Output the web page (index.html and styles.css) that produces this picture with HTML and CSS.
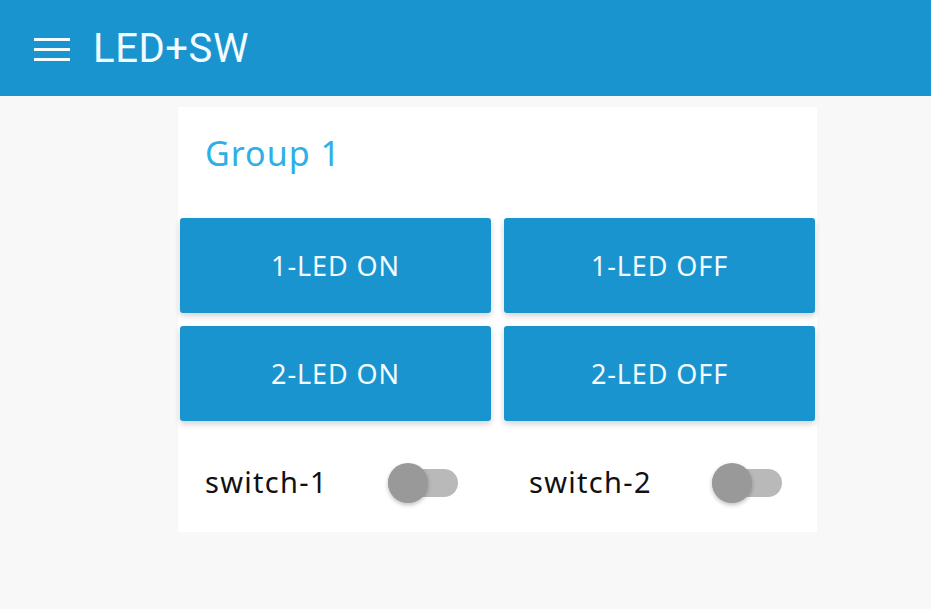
FILE: index.html
```html
<!DOCTYPE html>
<html>
<head>
<meta charset="utf-8">
<link rel="stylesheet" href="styles.css">
</head>
<body>
<header class="topbar">
  <span class="menu" aria-label="menu">
    <span class="bar"></span><span class="bar"></span><span class="bar"></span>
  </span>
  <h1 class="app-title">LED+SW</h1>
</header>
<main class="card">
  <h2 class="group-title">Group 1</h2>
  <div class="buttons">
    <button class="btn">1-LED ON</button>
    <button class="btn">1-LED OFF</button>
    <button class="btn">2-LED ON</button>
    <button class="btn">2-LED OFF</button>
  </div>
  <div class="switches">
    <div class="sw-item"><span class="sw-label">switch-1</span><span class="toggle"><span class="thumb"></span></span></div>
    <div class="sw-item"><span class="sw-label">switch-2</span><span class="toggle"><span class="thumb"></span></span></div>
  </div>
</main>
</body>
</html>
```
FILE: styles.css
```css
html, body {
  margin: 0;
  padding: 0;
}
body {
  background: #f8f8f8;
  font-family: "Noto Sans", Roboto, "Liberation Sans", sans-serif;
  width: 931px;
  height: 609px;
  overflow: hidden;
}
.topbar {
  height: 96px;
  background: #1a94cf;
  display: flex;
  align-items: center;
  padding-left: 34px;
  box-sizing: border-box;
}
.menu {
  width: 36px;
  display: flex;
  flex-direction: column;
  gap: 7px;
  margin-right: 23px;
  margin-top: 2px;
}
.bar {
  display: block;
  height: 3px;
  background: #f2fbff;
}
.app-title {
  margin: 0;
  font-family: Roboto, "Noto Sans", sans-serif;
  font-weight: 400;
  font-size: 40px;
  color: #f2fbff;
  letter-spacing: 0.6px;
}
.card {
  margin: 11px 0 0 178px;
  width: 639px;
  height: 425px;
  background: #ffffff;
  box-sizing: border-box;
  padding: 0 2px;
}
.group-title {
  margin: 0;
  height: 111px;
  box-sizing: border-box;
  padding: 23px 0 0 25px;
  font-weight: 400;
  font-size: 34px;
  letter-spacing: 1px;
  color: #2db0e6;
}
.buttons {
  display: grid;
  grid-template-columns: 311px 311px;
  grid-auto-rows: 95px;
  gap: 13px;
}
.btn {
  border: none;
  border-radius: 3px;
  background: #1a94cf;
  color: #f4fbff;
  font-family: "Noto Sans", Roboto, "Liberation Sans", sans-serif;
  font-size: 27px;
  letter-spacing: 0.9px;
  box-shadow: 0 3px 6px rgba(0,0,0,0.18);
  padding: 0;
}
.switches {
  display: grid;
  grid-template-columns: 311px 311px;
  gap: 13px;
  height: 111px;
  box-sizing: border-box;
  padding-top: 10px;
  align-items: center;
}
.sw-item {
  display: flex;
  align-items: center;
  padding-left: 25px;
}
.sw-label {
  font-size: 29px;
  letter-spacing: 1.3px;
  color: #111;
  width: 183px;
}
.toggle {
  position: relative;
  width: 70px;
  height: 28px;
  border-radius: 14px;
  background: #b9b9b9;
  margin-top: 2px;
}
.thumb {
  position: absolute;
  left: 0;
  top: -6px;
  width: 40px;
  height: 40px;
  border-radius: 50%;
  background: #999999;
  box-shadow: 0 2px 4px rgba(0,0,0,0.25);
}
```
